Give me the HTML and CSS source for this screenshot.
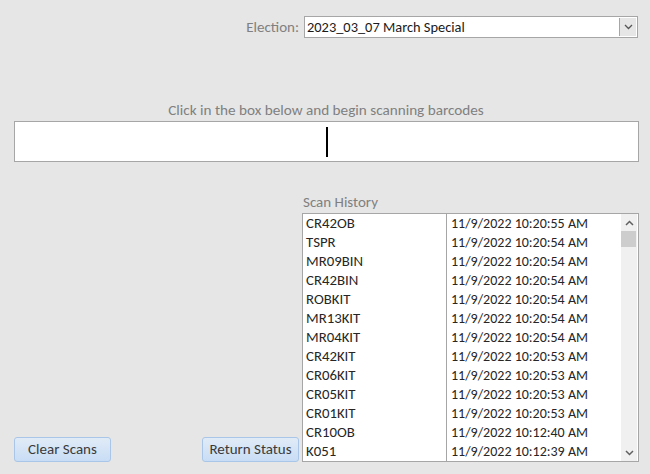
FILE: index.html
```html
<!DOCTYPE html>
<html>
<head>
<meta charset="utf-8">
<link rel="stylesheet" href="styles.css">
</head>
<body>
<div class="page">
  <div class="top">
    <span class="label">Election:</span>
    <div class="combo">
      <span class="combo-text">2023_03_07 March Special</span>
      <span class="combo-btn"><svg width="9" height="6" viewBox="0 0 9 6"><path d="M1 1 L4.5 4.5 L8 1" fill="none" stroke="#555" stroke-width="1.3"/></svg></span>
    </div>
  </div>
  <div class="scan-label">Click in the box below and begin scanning barcodes</div>
  <div class="scanbox"><span class="caret"></span></div>
  <div class="bottom">
    <div class="buttons">
      <button class="btn">Clear Scans</button>
      <button class="btn">Return Status</button>
    </div>
    <div class="history">
      <div class="label hist-label">Scan History</div>
      <div class="list">
        <div class="rows">
          <div class="row"><span class="c1">CR42OB</span><span class="c2">11/9/2022 10:20:55 AM</span></div>
          <div class="row"><span class="c1">TSPR</span><span class="c2">11/9/2022 10:20:54 AM</span></div>
          <div class="row"><span class="c1">MR09BIN</span><span class="c2">11/9/2022 10:20:54 AM</span></div>
          <div class="row"><span class="c1">CR42BIN</span><span class="c2">11/9/2022 10:20:54 AM</span></div>
          <div class="row"><span class="c1">ROBKIT</span><span class="c2">11/9/2022 10:20:54 AM</span></div>
          <div class="row"><span class="c1">MR13KIT</span><span class="c2">11/9/2022 10:20:54 AM</span></div>
          <div class="row"><span class="c1">MR04KIT</span><span class="c2">11/9/2022 10:20:54 AM</span></div>
          <div class="row"><span class="c1">CR42KIT</span><span class="c2">11/9/2022 10:20:53 AM</span></div>
          <div class="row"><span class="c1">CR06KIT</span><span class="c2">11/9/2022 10:20:53 AM</span></div>
          <div class="row"><span class="c1">CR05KIT</span><span class="c2">11/9/2022 10:20:53 AM</span></div>
          <div class="row"><span class="c1">CR01KIT</span><span class="c2">11/9/2022 10:20:53 AM</span></div>
          <div class="row"><span class="c1">CR10OB</span><span class="c2">11/9/2022 10:12:40 AM</span></div>
          <div class="row"><span class="c1">K051</span><span class="c2">11/9/2022 10:12:39 AM</span></div>
        </div>
        <div class="scrollbar">
          <span class="arrow"><svg width="9" height="6" viewBox="0 0 9 6"><path d="M1 5 L4.5 1.5 L8 5" fill="none" stroke="#606060" stroke-width="1.5"/></svg></span>
          <span class="thumb"></span>
          <span class="track"></span>
          <span class="arrow"><svg width="9" height="6" viewBox="0 0 9 6"><path d="M1 1 L4.5 4.5 L8 1" fill="none" stroke="#606060" stroke-width="1.5"/></svg></span>
        </div>
      </div>
    </div>
  </div>
</div>
</body>
</html>
```

FILE: styles.css
```css
html, body {
  margin: 0;
  padding: 0;
  background: #e6e6e6;
}
body {
  font-family: Carlito, Lato, "Open Sans", sans-serif;
  font-size: 14px;
  color: #262626;
}
.page {
  width: 650px;
  height: 474px;
  overflow: hidden;
}
.top {
  display: flex;
  justify-content: flex-end;
  align-items: center;
  gap: 5px;
  padding: 16px 12px 0 0;
}
.label {
  color: #808080;
  font-size: 15px;
}
.combo {
  width: 334px;
  height: 22px;
  box-sizing: border-box;
  background: #fff;
  border: 1px solid #a6a6a6;
  display: flex;
  align-items: center;
}
.combo-text {
  flex: 1;
  padding-left: 2px;
  font-size: 14.4px;
  color: #1a1a1a;
}
.combo-btn {
  width: 16px;
  height: 18px;
  margin-right: 1px;
  background: #e6e6e6;
  border-left: 1px solid #a6a6a6;
  display: flex;
  align-items: center;
  justify-content: center;
}
.scan-label {
  margin-top: 63px;
  width: 652px;
  text-align: center;
  line-height: 18px;
  font-size: 15.2px;
  color: #808080;
}
.scanbox {
  margin: 2px 0 0 14px;
  width: 625px;
  height: 41px;
  box-sizing: border-box;
  background: #fff;
  border: 1px solid #a6a6a6;
  display: flex;
  align-items: center;
  justify-content: center;
}
.caret {
  width: 2px;
  height: 30px;
  background: #000;
  margin-top: 1px;
}
.bottom {
  display: flex;
  align-items: flex-end;
  margin-top: 31px;
}
.buttons {
  width: 302px;
  box-sizing: border-box;
  padding: 0 3px 0 14px;
  display: flex;
  justify-content: space-between;
  margin-bottom: 13px;
}
.btn {
  width: 97px;
  height: 25px;
  box-sizing: border-box;
  border: 1px solid #a9c6e8;
  border-radius: 3px;
  background: linear-gradient(#e1ebf7, #c8ddf5);
  font-family: inherit;
  font-size: 15px;
  color: #3a3a3a;
  padding: 0 0 2px 0;
}
.history {
  width: 337px;
  margin-bottom: 13px;
}
.hist-label {
  padding-left: 1px;
  line-height: 18px;
  margin-bottom: 2px;
}
.list {
  height: 249px;
  box-sizing: border-box;
  background: #fff;
  border: 1px solid #a6a6a6;
  display: flex;
}
.rows {
  flex: 1;
  background: linear-gradient(to right, transparent 143px, #a6a6a6 143px, #a6a6a6 144px, transparent 144px);
}
.row {
  display: flex;
  height: 19px;
  line-height: 19px;
}
.c1 {
  width: 144px;
  padding-left: 3px;
  box-sizing: border-box;
  font-size: 14.8px;
}
.c2 {
  padding-left: 4px;
}
.scrollbar {
  width: 16px;
  margin-right: 1px;
  background: #f0f0f0;
  display: flex;
  flex-direction: column;
}
.arrow {
  height: 17px;
  display: flex;
  align-items: center;
  justify-content: center;
}
.thumb {
  height: 16px;
  margin: 0 1px 0 0;
  background: #cdcdcd;
}
.track {
  flex: 1;
}
```
